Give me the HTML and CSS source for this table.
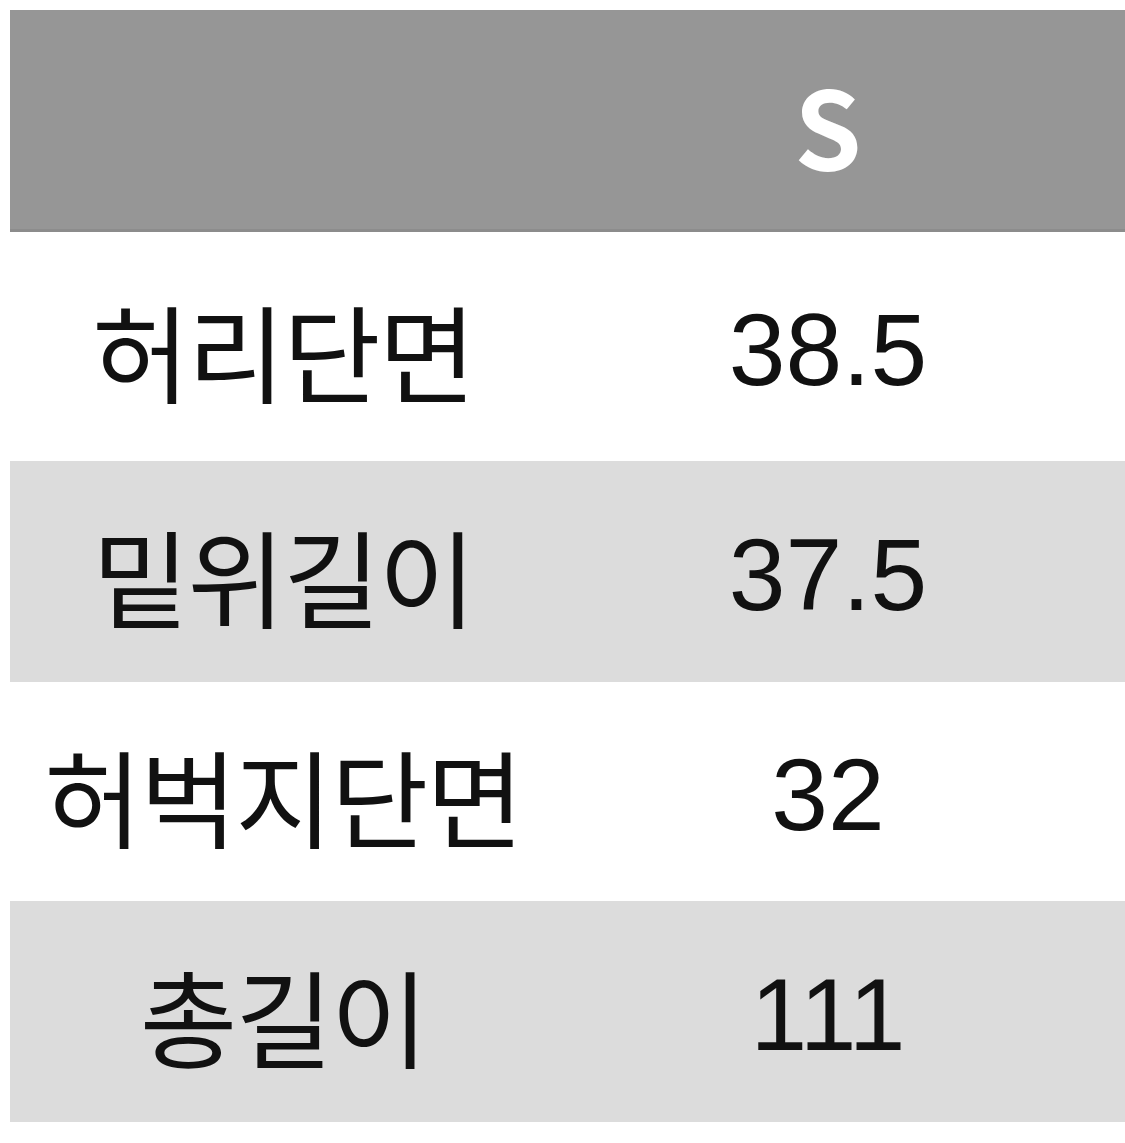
FILE: index.html
```html
<!DOCTYPE html>
<html lang="ko">
<head>
<meta charset="utf-8">
<title>사이즈</title>
<link rel="stylesheet" href="styles.css">
</head>
<body>
<div class="size-table">
  <div class="cell head"></div>
  <div class="cell head size">S</div>
  <div class="cell head"></div>

  <div class="cell label r1">허리단면</div>
  <div class="cell num r1">38.5</div>
  <div class="cell r1"></div>

  <div class="cell label r2 alt">밑위길이</div>
  <div class="cell num r2 alt">37.5</div>
  <div class="cell r2 alt"></div>

  <div class="cell label r3">허벅지단면</div>
  <div class="cell num r3">32</div>
  <div class="cell r3"></div>

  <div class="cell label r4 alt">총길이</div>
  <div class="cell num r4 alt">111</div>
  <div class="cell r4 alt"></div>
</div>
</body>
</html>
```
FILE: styles.css
```css
html, body {
  margin: 0;
  padding: 0;
  background: #ffffff;
  overflow: hidden;
}

body {
  padding: 10px 0 0 10px;
  width: 1400px;
}

.size-table {
  display: grid;
  grid-template-columns: 546px 544px 300px;
  grid-template-rows: 222px 229px 221px 219px 221px;
}

.cell {
  display: flex;
  align-items: center;
  justify-content: center;
  color: #111111;
  white-space: nowrap;
}

.head {
  background: #969696;
  box-shadow: inset 0 -3px 0 #8c8c8c;
}

.size {
  color: #ffffff;
  font-family: "Noto Sans CJK KR", "Noto Sans", sans-serif;
  font-weight: bold;
  font-size: 108px;
  padding-top: 4px;
  box-sizing: border-box;
}

.alt {
  background: #dcdcdc;
}

.label {
  font-family: "Noto Sans CJK KR", "Noto Sans", sans-serif;
  font-size: 106px;
  letter-spacing: -2px;
  padding-top: 4px;
  box-sizing: border-box;
}

.num {
  font-family: "Liberation Sans", Arial, sans-serif;
  font-size: 102px;
  padding-top: 8px;
  box-sizing: border-box;
}
```
